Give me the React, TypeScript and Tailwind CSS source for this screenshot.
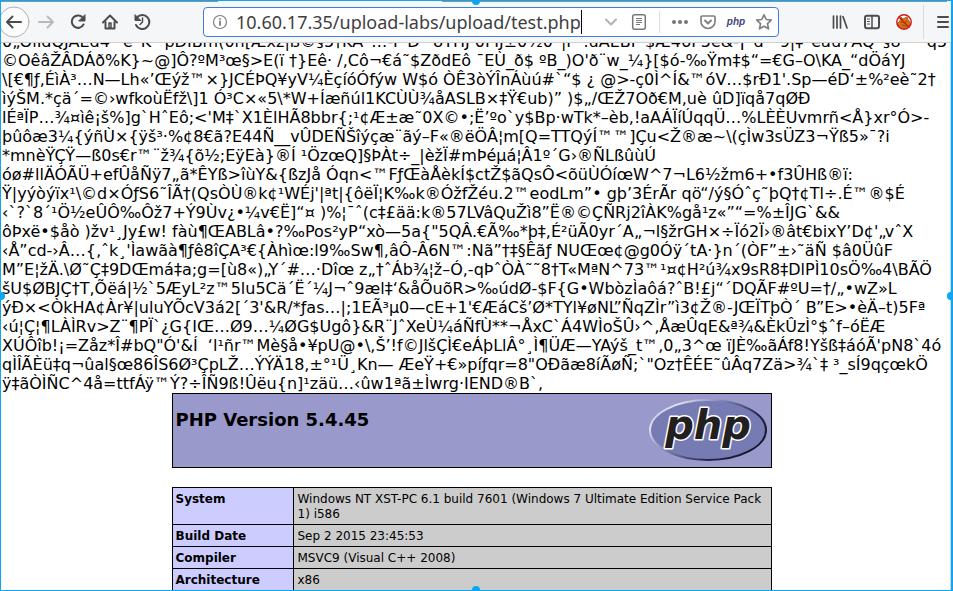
import type { ReactNode } from "react";

const dump: string[] = [
  "0„OiIdQJAEd4¨ e˜K¨ pDIBm(0h[Æxz|ß©§5†KÀ˜…-F D^8THJ 0FIJ±0½0¯|F¨.uAEBF $Æ46P5e&-¡¨d¨¯9|‡¨eâu7AQ¨§8 ˜˜ q5",
  "©OêâŽÂDÁð%K}~@]Ô?ºM³œ§>E(ï †}Eê· /,Cô¬€á˜$ZðdEô ¯EÙ_ð$ ºB_)O'ð¨w_¼}[$ó-‰Ÿm‡$“=€G–O\\KA_“dÖáYJ",
  "\\[€¶ƒ,ÉìÀ³…N—Lh«’Œýž™×}JCÉÞQ¥yV¼ÈçíóÓfýw W$ó ÒÊ3òÝÎnÁùú#`“$ ¿ @>-ç0Ì^Í&™óV…$rÐ1'.Sp—éD‘±%²eè˜2†",
  "ìýŠM.*çä´=©›wfkoùËfž\\]1 Ó³C×«5\\*W+Íæñúl1KCÙÙ¾åASLB×‡Ÿ€ub)” )$„/ŒŽ7Oð€M,uè ûD]ïqå7qØÐ",
  "lÉªÏP…¾¤ìê¡š%]g`HˆEô;<'M‡`X1ÈlHÃ8bbr{;¹¢Æ±æ˜0X©•;Ë’ºo`y$Bp·wTk*–èb,!aAÁÏíÚqqÜ…%LÈÈUvmrñ<Å}xr°Ó>-",
  "þûôæ3¼{ýñÙ×{ÿš³·%¢8€ã?E44Ñ__vÛDEÑŠîýçæ¨ãý–F«®ëÖÂ¦m[Q=TTQýÍ™™]Çu<Ž®æ~\\(çÌw3sÜZ3¬Ÿß5»¯?i",
  "*mnèŸÇŸ—ß0s€r™¨ž¾{õ½;EÿEà}®Í ¹ÖzœQ]§ÞÀt÷_|èžÏ#mÞéµá¦Â1º´G›®ÑLßûùÚ",
  "óø#llÄÓÃÜ+efÛåÑÿ7„ã*ÊYß>îùY&{ßzJå Óqn<™FƒŒàÅèkÍ$ctŽ$ãQsÔ<õüÙÓíœW^7¬L6½žm6+•f3ÛHß®ï:",
  "Ÿ|yýòýïx¹\\©d×ÓƒS6˜ÎÃ†(QsÒÙ®k¢¹WÉj'|ªt|{ôëÏ¦K‰k®ÓžfŽéu.2™eodLm”• gþ’3ÉrÃr qö“/ý§Óˆç˜þQ†¢Tl÷.É™®$É",
  "‹`?`8´¹Ö½eÛÔ‰Ôž7+Ý9Ùv¿•¼v€Ë]“¤ )%¦¯ˆ(c‡£ää:k®57LVâQuŽì8”Ë®©ÇÑRj2îÀK%gå¹z«”“=%±ÎJG`&&",
  "ôÞxë•$åò )žv¹¸Jy£w! fàù¶ŒABLâ•?‰Pos²yP“xò—5a{\"5QÂ.€Ã‰*þ‡,É²üÃ0yr´A„¬l§žrGH×÷Ïó2Ï›®ât€bixY’D¢'„vˆX",
  "‹Å”cd-›Â…{‚ˆk¸'Ìawãà¶ƒê8îÇA³€{Àhìœ:l9‰Sw¶,âÔ-Â6N™:Nã”†‡§Êãƒ NUŒœ¢@g0Óÿ´tA·}n´(ÒF”±›˜äÑ $â0ÜûF",
  "M”E¦žÄ.\\Ø˜Ç‡9DŒmá‡a;g=[ù8«)„Y´#…·Dîœ z„†ˆÁb¾¦ž–Ó,-qÞˆÒÀ˜˜8†T«MªN^73™¹¤¢H²ú¾x9sR8‡DlPÌ10sÖ‰4\\BÃÖ",
  "šU$ØBJÇ†T,Õëá|½`5ÆyL²z™5lu5Cä´Ë´¼J¬ˆ9æl‡‘&åÕuõR>‰údØ-$F{G•WbòzÌaôá?ˆB!£j“´DQÃF#ºU=†/„•wZ»L",
  "ýÐ×<ÒkHA¢Àr¥|uluYÕcV3á2[´3'&R/*ƒas…|;1EÃ³µ0—cE+1'€ÆáCš’Ø*TYl¥øNL”ÑqZÌr”ì3¢Ž®-JŒÏTþÒ´ B”E>•èÄ–t)5Fª",
  "‹ú¦Ç¦¶LÀÌRv>Z¨¶PÏ`¿G{IŒ…Ø9…¼ØG$Ugô}&R¨JˆXeÙ¼áÑfÙ**¬ÅxC`Á4WÌoŠÛ›^‚ÅæÛqE&ª¾&ÈkÛzÌ°$ˆf–óËÆ",
  "XÚÔîb!¡=Zåz*Î#bQ\"Ó'&Í  ‘l¹ñr™Mè§å•¥pU@•\\,Š’!f©JlšÇÌ€eÁþLlÂ°¸Ì¶ÜÆ—YAýš_t™,0„3^œ ïJÈ‰ãÁf8!Yšß‡áóÃ'pN8`4ó",
  "qÌÎÃÈü‡q¬ûal§œ86ÎS6Ø³ÇpLŽ…ÝÝÄ18,±°¹Ü¸Kn— ÆeŸ+€»píƒqr=8\"OÐãæ8íÃøÑ;`\"Oz†ÊÉE˜ûÂq7Zä>¾`‡ ³_sÍ9qçœkÖ",
  "ÿ‡ãÒÌÑC^4å=ttfÁÿ™Ý?÷ÎÑ9ß!Ûëu{n]¹zäü…‹ûw1ªã±Ìwrg·IEND®B`,",
];

const info = [
  ["System", "Windows NT XST-PC 6.1 build 7601 (Windows 7 Ultimate Edition Service Pack 1) i586"],
  ["Build Date", "Sep 2 2015 23:45:53"],
  ["Compiler", "MSVC9 (Visual C++ 2008)"],
  ["Architecture", "x86"],
];

function ToolButton({ label, className = "text-[#4c4c50]", children }: { label: string; className?: string; children: ReactNode }) {
  return (
    <button type="button" aria-label={label} className={`flex size-8 shrink-0 items-center justify-center ${className}`}>
      <svg viewBox="0 0 16 16" className="size-4 overflow-visible" fill="none" stroke="currentColor" strokeWidth="2" strokeLinecap="round" strokeLinejoin="round">
        {children}
      </svg>
    </button>
  );
}

function Toolbar() {
  return (
    <header className="flex h-[42px] shrink-0 items-center border-b border-[#cfcfd1] bg-[#f5f6f7]">
      <nav className="-ml-[3px] flex items-center" aria-label="Navigation">
        <ToolButton label="Back">
          <circle cx="8" cy="8" r="15" fill="#fcfcfc" stroke="#b1b1b3" strokeWidth="1" />
          <path d="M15 8H1M6.500 2.500 1 8l5.500 5.500" />
        </ToolButton>
        <ToolButton label="Forward" className="text-[#b9b9bc]">
          <path d="M1 8h14M9.500 2.500 15 8l-5.500 5.500" />
        </ToolButton>
        <ToolButton label="Reload">
          <path d="M13.500 10.500A6.200 6.200 0 1 1 13 4" />
          <path d="M15 1v6H9z" fill="currentColor" strokeWidth="1" />
        </ToolButton>
        <ToolButton label="Home">
          <path d="M1 8.500 8 1.500l7 7" />
          <path d="M3.500 8v6.500h9V8" />
          <path d="M7 9h2v5H7z" strokeWidth="1.500" />
        </ToolButton>
        <ToolButton label="History">
          <path d="M3 3.500A7 7 0 1 1 2 11" />
          <path d="M1 1v5.500h5.500z" fill="currentColor" strokeWidth="1" />
          <path d="M8.500 4v4L6 10.500" strokeWidth="1.500" />
        </ToolButton>
      </nav>

      <div className="ml-[45px] flex h-[30px] min-w-0 flex-1 items-center rounded-[4px] border border-[#3d7fdd] bg-white">
        <ToolButton label="Site information" className="text-[#818184]">
          <circle cx="8" cy="8" r="6.500" strokeWidth="1.200" />
          <path d="M8 7.500v3.500M8 4.800v.2" strokeWidth="1.800" />
        </ToolButton>
        <input
          aria-label="Address"
          defaultValue="10.60.17.35/upload-labs/upload/test.php"
          spellCheck={false}
          className="field-sizing-content h-7 min-w-0 bg-transparent font-['Noto_Sans',sans-serif] text-[18px] text-[#3e3e42] outline-none"
        />
        <span className="h-6 w-px shrink-0 bg-black" />
        <span className="flex-1" />
        <ToolButton label="Show history" className="text-[#b1b1b3]">
          <path d="M3 5.500l5 5 5-5" />
        </ToolButton>
        <button type="button" aria-label="Reader view" className="flex w-6 shrink-0 items-center justify-center text-[#77777a]">
          <svg viewBox="0 0 16 16" className="size-4" fill="none" stroke="currentColor" strokeWidth="1.500">
            <rect x="1.700" y=".8" width="12.600" height="14.400" rx="2" />
            <path d="M5 4.500h6M5 6.500h6M5 8.500h6M5 10.500h4" strokeWidth="1" />
          </svg>
        </button>
        <span className="mr-[6px] ml-2 h-[22px] w-px shrink-0 bg-[#dedede]" />
        <button type="button" aria-label="Page actions" className="flex w-7 shrink-0 items-center justify-center text-[#77777a]">
          <svg viewBox="0 0 18 4" className="h-1 w-[18px]" fill="currentColor">
            <circle cx="3" cy="2" r="2" />
            <circle cx="9" cy="2" r="2" />
            <circle cx="15" cy="2" r="2" />
          </svg>
        </button>
        <button type="button" aria-label="Save to Pocket" className="flex w-7 shrink-0 items-center justify-center text-[#818184]">
          <svg viewBox="0 0 16 16" className="size-4" fill="none" stroke="currentColor" strokeWidth="2" strokeLinecap="round" strokeLinejoin="round">
            <path d="M2 2h12a1 1 0 0 1 1 1v4.500a7 7 0 0 1-14 0V3a1 1 0 0 1 1-1z" strokeWidth="1.700" />
            <path d="M5 6.500l3 3 3-3" />
          </svg>
        </button>
        <button type="button" className="w-7 shrink-0 text-center font-['Liberation_Sans',sans-serif] text-[10px] leading-4 font-bold text-[#43487c] italic">
          php
        </button>
        <button type="button" aria-label="Bookmark this page" className="flex w-7 shrink-0 items-center justify-center text-[#818184]">
          <svg viewBox="0 0 16 16" className="size-4 overflow-visible" fill="none" stroke="currentColor" strokeWidth="1.700" strokeLinejoin="round">
            <path d="M8 .8l2.200 4.700 5.100.6-3.800 3.500 1 5.200L8 12.300l-4.500 2.500 1-5.200L.7 6.100l5.100-.6z" />
          </svg>
        </button>
      </div>

      <div className="-mr-2 ml-[45px] flex items-center">
        <ToolButton label="Library">
          <path d="M1.500 2v12M5 2v12M8.500 2v12M11 2.500l4 11.500" strokeWidth="1.700" />
        </ToolButton>
        <ToolButton label="Sidebars">
          <rect x="1" y="1.800" width="14" height="12.400" rx="2" />
          <path d="M8 2v12" strokeWidth="1.500" />
          <path d="M3.500 5h2M3.500 7.500h2M3.500 10h2" strokeWidth="1" />
        </ToolButton>
        <ToolButton label="FoxyProxy">
          <path d="M2 12c-1-3 1-4 2-5l1-4 2 2 4-2 1 3c3 2 2 6 1 7-3 2-8 2-11-1z" fill="#d9750d" stroke="#b55c10" strokeWidth="1" />
          <path d="M5 8l3 1 3-2M6 11l4 1" stroke="#8d4a17" strokeWidth="1" />
          <circle cx="8" cy="8" r="7.200" stroke="#cf1b20" strokeWidth="1.500" />
          <path d="M3 3l10 10" stroke="#cf1b20" strokeWidth="1.500" />
        </ToolButton>
        <span className="mx-[3px] h-[34px] w-px bg-[#dadadc]" />
        <ToolButton label="Open menu">
          <path d="M3 3h10M3 8h10M3 13h10" />
        </ToolButton>
      </div>
    </header>
  );
}

function PhpLogo() {
  return (
    <svg viewBox="0 0 120 64" className="h-16 w-[120px]" role="img" aria-label="PHP logo">
      <defs>
        <linearGradient id="rim" x1="0" y1="0" x2="1" y2="0.6">
          <stop offset="0" stopColor="#9999cc" />
          <stop offset="0.2" stopColor="#e0e0f0" />
          <stop offset="0.500" stopColor="#7377ad" />
          <stop offset="0.8" stopColor="#26264a" />
          <stop offset="1" stopColor="#17172c" />
        </linearGradient>
      </defs>
      <ellipse cx="60" cy="32" rx="58" ry="30" fill="#777bb3" stroke="url(#rim)" strokeWidth="2" />
      <text
        x="60"
        y="41"
        textAnchor="middle"
        className="font-['DejaVu_Sans',sans-serif] text-[40px] font-bold italic"
        fill="#231f20"
        stroke="#fff"
        strokeWidth="3"
        strokeLinejoin="round"
        paintOrder="stroke"
      >
        php
      </text>
    </svg>
  );
}

function PhpInfo() {
  return (
    <div className="mx-auto w-full max-w-[600px] text-xs leading-[15px] text-black">
      <div className="flex h-[75px] items-start justify-between border border-black bg-[#9999cc] px-[3px] pt-1">
        <h1 className="pt-3 text-lg leading-5 font-bold">PHP Version 5.4.45</h1>
        <PhpLogo />
      </div>
      <table className="mt-[19px] w-full table-fixed border-collapse">
        <tbody>
          {info.map(([name, value]) => (
            <tr key={name}>
              <th scope="row" className="w-[121px] border border-black bg-[#ccccff] px-[3px] pt-1 pb-[2px] text-left align-top font-bold">
                {name}
              </th>
              <td className="border border-black bg-[#cccccc] px-1 pt-1 pb-[2px] align-top">{value}</td>
            </tr>
          ))}
        </tbody>
      </table>
    </div>
  );
}

export default function App() {
  return (
    <div className="relative flex h-screen flex-col overflow-hidden border border-r-2 border-[#0ba7f5] bg-white font-['DejaVu_Sans',sans-serif]">
      <Toolbar />
      <main className="flex-1 overflow-hidden border-r border-[#d8d8dc] pr-2">
        <div className="-mt-[11px]">
          <div className="text-base leading-[19px] text-black">
            {dump.map((line) => (
              <p key={line} className="h-[19px] pl-px whitespace-pre">
                {line}
              </p>
            ))}
          </div>
          <PhpInfo />
        </div>
      </main>
      <span className="absolute top-0 left-0 h-px w-[217px] bg-[#88949c]" />
      <span className="absolute top-0 right-1 left-[441px] h-px bg-[#88949c]" />
      <span className="absolute -top-1 left-1/2 size-2 -translate-x-1/2 rounded-full bg-[#0ba7f5]" />
      <span className="absolute -bottom-1 left-1/2 size-2 -translate-x-1/2 rounded-full bg-[#0ba7f5]" />
      <span className="absolute top-1/2 -left-1 size-2 -translate-y-1/2 rounded-full bg-[#0ba7f5]" />
      <span className="absolute top-1/2 -right-1 size-2 -translate-y-1/2 rounded-full bg-[#0ba7f5]" />
    </div>
  );
}
